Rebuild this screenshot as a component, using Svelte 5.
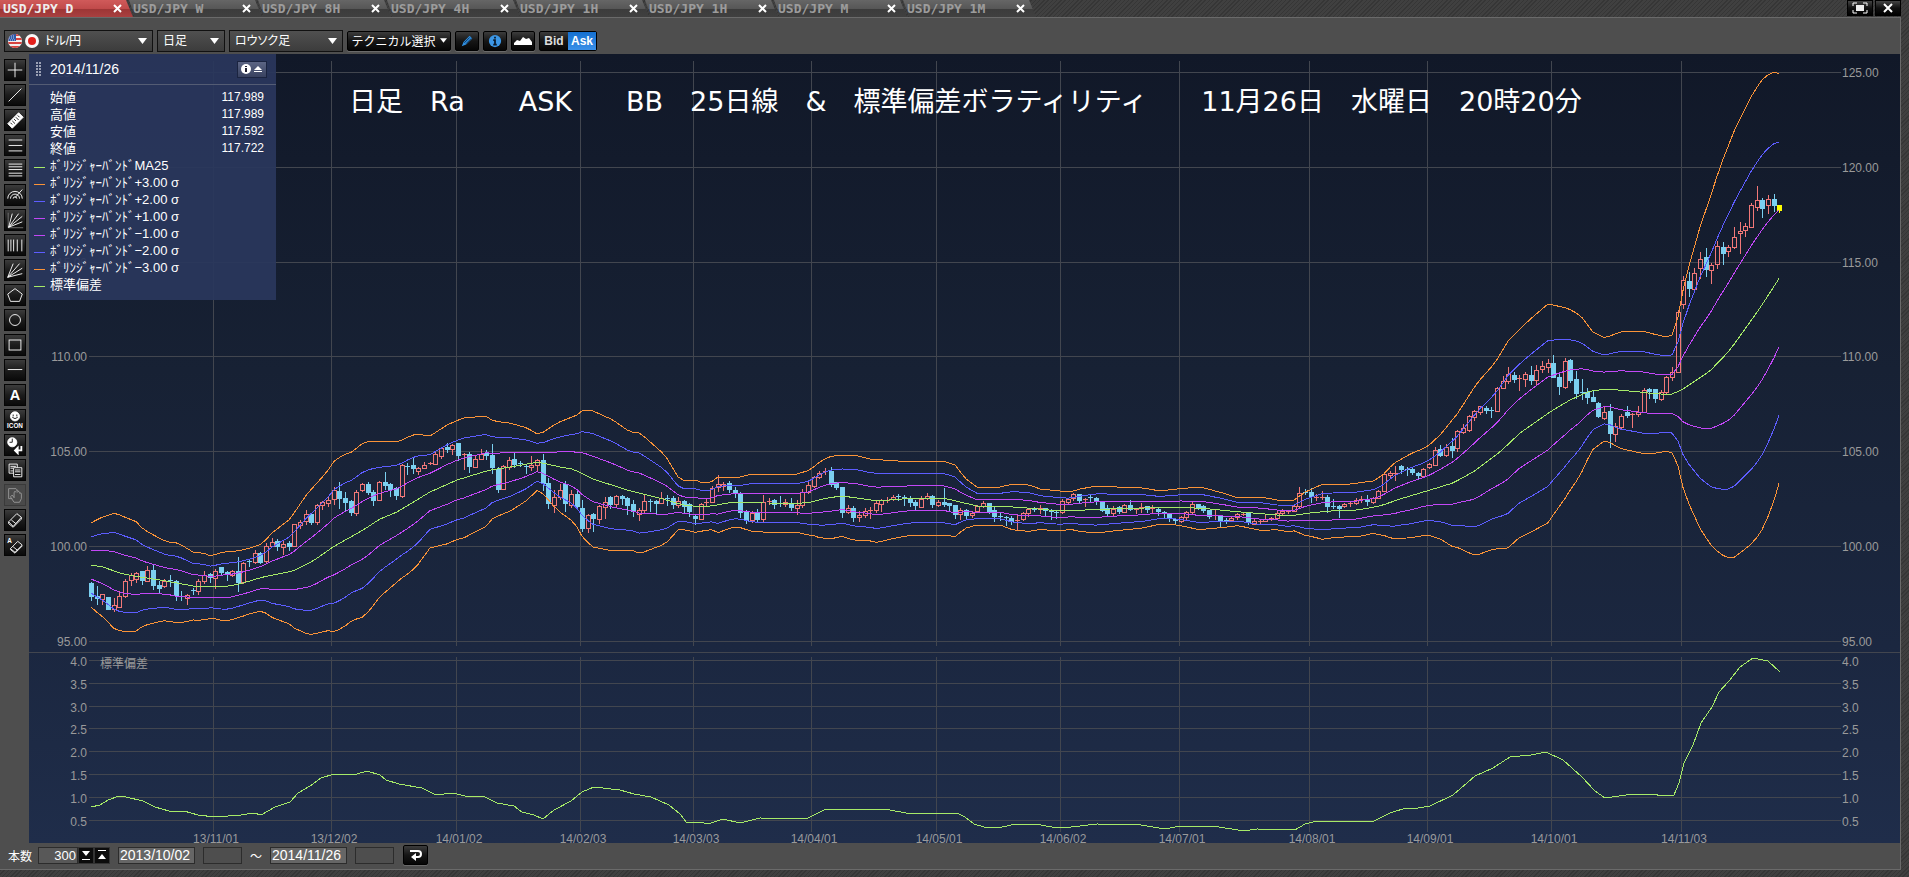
<script lang="ts">
	type Point = [number, number];

	interface Candle {
		x: number;
		up: boolean;
		high: number;
		top: number;
		bottom: number;
		low: number;
	}

	const tabs = ['D', 'W', '8H', '4H', '1H', '1H', 'M', '1M'];

	const tools = [
		'十字線', 'ライン', '定規', '水平線3本', '水平線5本', '円弧', 'ファン', '縦線', '放射線', '五角形',
		'円', '四角', '水平線', 'テキスト', 'アイコン', '時間', 'コピー', '移動', '消しゴム', 'すべて消す'
	];

	const prices = [
		{ label: '始値', value: '117.989' },
		{ label: '高値', value: '117.989' },
		{ label: '安値', value: '117.592' },
		{ label: '終値', value: '117.722' }
	];

	const band = 'ﾎﾞﾘﾝｼﾞｬｰﾊﾞﾝﾄﾞ';
	const legend = [
		{ tone: 'ma', label: band + 'MA25' },
		{ tone: 's3', label: band + '+3.00 σ' },
		{ tone: 's2', label: band + '+2.00 σ' },
		{ tone: 's1', label: band + '+1.00 σ' },
		{ tone: 's1', label: band + '−1.00 σ' },
		{ tone: 's2', label: band + '−2.00 σ' },
		{ tone: 's3', label: band + '−3.00 σ' },
		{ tone: 'ma', label: '標準偏差' }
	];

	const months = [
		{ x: 213, label: '13/11/01' },
		{ x: 331, label: '13/12/02' },
		{ x: 456, label: '14/01/02' },
		{ x: 580, label: '14/02/03' },
		{ x: 693, label: '14/03/03' },
		{ x: 811, label: '14/04/01' },
		{ x: 936, label: '14/05/01' },
		{ x: 1060, label: '14/06/02' },
		{ x: 1179, label: '14/07/01' },
		{ x: 1309, label: '14/08/01' },
		{ x: 1427, label: '14/09/01' },
		{ x: 1551, label: '14/10/01' },
		{ x: 1681, label: '14/11/03' }
	];

	const priceTicks = [125, 120, 115, 110, 105, 100, 95].map((p, i) => ({
		y: Math.round(72 + i * 94.8),
		label: p.toFixed(2)
	}));

	const sdTicks = [4, 3.5, 3, 2.5, 2, 1.5, 1, 0.5].map((v, i) => ({
		y: Math.round(660 + i * 22.8),
		label: v.toFixed(1)
	}));

	// direction, high, body top, body bottom, low
	const rows = `d 582 583 597 601,d 586 596 599 605,u 594 594 599 605,d 597 597 610 610,u 598 605 609 612,u 591 596 607 607
u 579 581 596 598,u 573 575 580 586,u 572 573 579 583,d 571 571 581 585,u 566 570 581 582,d 565 570 586 590
d 581 585 589 593,u 579 581 586 588,d 575 580 581 587,d 580 581 596 601,d 591 596 597 601,u 594 595 598 605
d 588 590 591 595,u 579 581 591 595,u 571 575 581 584,d 573 574 578 583,u 569 571 578 589,d 567 567 573 575
d 571 572 575 581,u 570 571 575 577,d 557 571 583 592,u 562 563 582 584,d 559 561 562 567,u 550 553 562 564
d 552 553 563 564,u 543 546 561 563,u 538 542 546 547,d 539 541 547 551,u 540 544 547 555,d 541 543 547 551
u 524 524 546 547,u 520 522 525 529,u 510 514 521 525,d 513 514 523 525,u 504 505 522 525,u 501 502 505 510
u 497 500 503 507,u 487 490 499 505,d 482 491 499 509,d 492 498 503 511,d 500 501 513 516,u 490 492 513 516
u 483 484 490 492,d 482 484 493 495,d 490 492 501 506,u 481 482 500 501,d 472 482 486 490,d 483 484 490 497
d 487 488 496 500,u 464 465 496 498,d 463 466 467 475,d 458 465 469 474,u 467 468 471 475,u 462 465 468 469
u 462 463 464 465,u 452 454 464 464,u 447 448 456 459,d 443 447 450 453,u 444 445 449 455,d 443 443 456 461
u 453 454 455 470,d 452 454 467 473,u 455 459 467 468,u 449 454 459 460,d 450 453 456 460,d 444 455 468 474
d 467 469 490 493,u 465 466 489 490,u 457 460 467 470,d 452 459 465 468,d 461 463 464 467,d 465 466 467 474
u 456 465 467 471,u 459 460 465 472,d 454 460 484 491,d 478 483 504 509,u 490 497 505 513,u 484 490 497 500
d 481 484 504 512,u 490 494 505 508,d 489 494 507 510,d 500 508 529 532,u 514 515 528 533,d 513 514 519 532
u 505 506 519 524,u 497 502 507 519,d 496 497 505 509,u 495 496 504 508,d 495 496 499 505,d 497 498 506 515
d 500 504 512 517,u 508 510 514 521,u 495 501 510 513,d 499 501 502 512,d 500 501 504 514,u 492 498 503 504
d 495 498 499 506,d 496 498 505 509,u 497 501 505 508,d 500 501 507 514,d 503 504 512 517,d 514 516 519 525
u 503 504 519 520,u 498 502 503 506,u 486 488 502 503,u 475 484 487 492,u 482 484 486 491,d 481 483 490 493
d 487 490 493 498,d 492 494 513 518,d 510 512 521 524,u 511 513 520 523,d 509 513 520 523,u 495 502 519 522
u 498 501 502 505,d 499 500 505 509,d 496 503 504 507,u 499 502 504 507,d 498 503 508 511,u 500 505 508 515
u 489 492 505 508,u 482 485 492 494,u 476 477 486 488,u 471 473 477 479,u 468 471 472 475,d 467 471 485 487
d 482 482 488 490,d 487 487 513 518,u 505 508 512 514,d 506 508 518 522,u 511 515 517 522,u 508 511 515 518
u 507 510 511 519,u 501 503 510 513,u 499 500 504 512,u 497 500 501 503,u 495 497 499 501,d 494 496 497 501
d 495 497 498 506,d 496 498 503 507,d 500 502 506 510,u 496 499 507 508,u 493 496 498 500,d 495 496 505 508
u 500 502 505 507,d 488 502 505 507,d 503 503 506 511,d 505 505 515 519,u 508 510 514 520,d 509 510 516 519
u 511 513 515 518,u 505 506 511 512,u 501 503 506 508,d 503 503 513 514,d 506 510 517 522,d 513 516 517 521
d 516 517 518 526,d 516 518 522 525,u 515 520 521 530,u 512 513 519 521,u 509 509 513 517,d 507 509 510 512
u 505 508 509 514,d 508 508 511 516,d 509 511 512 520,d 510 512 513 519,u 499 501 512 514,u 498 499 502 504
u 493 494 498 501,d 494 494 501 503,u 498 499 500 507,d 495 497 498 502,d 497 498 502 505,d 501 502 511 512
d 505 508 514 516,u 506 509 513 516,d 506 507 512 514,u 504 505 512 513,d 500 505 510 511,u 508 509 510 514
u 503 507 508 513,d 506 506 510 513,u 505 508 509 513,d 508 509 512 516,d 511 512 514 519,d 513 514 519 522
d 518 519 521 524,u 516 517 521 523,u 511 512 517 520,u 502 504 512 514,d 504 504 508 510,d 505 506 511 513
d 510 510 517 519,u 509 515 515 520,d 515 515 521 527,d 518 520 521 524,u 516 518 520 522,u 513 514 517 520
u 513 514 515 516,d 513 513 523 525,u 519 521 524 525,u 520 521 522 524,u 515 519 521 522,u 517 518 519 521
u 511 513 518 520,u 509 511 513 515,u 510 511 512 514,u 505 506 511 512,u 487 493 506 508,d 489 492 493 495
d 488 492 497 503,u 494 497 498 501,u 491 497 498 500,d 495 497 507 513,d 499 506 507 509,d 505 506 509 518
u 503 504 506 508,u 501 503 504 507,u 498 500 503 505,u 496 499 500 503,d 495 499 502 506,u 497 498 502 504
u 490 491 498 499,u 473 474 491 492,u 471 473 475 479,u 466 473 474 481,d 465 466 470 474,d 467 469 470 476
d 468 469 473 475,d 472 473 476 479,u 468 469 476 477,u 463 464 467 469,u 447 450 465 466,d 445 449 456 457
u 444 447 455 457,d 438 446 451 458,u 430 431 448 452,u 424 428 432 434,u 415 416 430 432,u 410 411 417 421
u 406 406 412 415,d 406 408 411 414,d 407 410 411 418,u 387 388 411 412,u 376 381 388 389,u 367 374 381 384
d 372 375 380 383,u 375 378 379 391,u 372 374 379 387,d 366 375 381 385,u 365 370 380 386,u 361 366 369 373
u 359 363 367 373,d 355 363 378 378,d 373 377 387 395,u 358 361 387 389,d 359 360 381 383,d 371 379 394 399
d 379 392 393 400,d 388 392 398 404,d 391 397 402 402,d 402 403 417 418,u 407 412 418 420,d 404 411 434 448
u 423 426 434 442,u 414 416 427 429,d 406 412 416 418,u 413 414 415 428,u 406 412 414 417,u 388 390 412 413
d 388 389 392 399,d 389 389 399 403,u 390 392 399 401,u 376 377 392 395,u 367 372 377 381,u 310 312 372 373
u 276 280 304 309,d 272 281 289 297,u 268 273 289 291,u 252 259 268 279,d 248 257 270 277,u 263 265 270 284
u 241 246 264 269,d 242 247 254 265,u 245 247 251 257,u 227 237 247 249,u 222 231 233 254,u 223 226 230 237
u 203 205 227 228,u 186 200 207 211,d 198 200 209 218,u 195 199 205 214,d 194 199 206 212,d 205 205 211 213`;

	const candles: Candle[] = rows.split(/[,\n]+/).map((row, i) => {
		const [dir, high, top, bottom, low] = row.trim().split(' ');
		return {
			x: Math.round(91 + i * 5.646),
			up: dir === 'u',
			high: +high,
			top: +top,
			bottom: Math.max(+bottom, +top + 1),
			low: +low
		};
	});

	const average: Point[] = [
		[91, 565], [103, 567], [123, 574], [140, 577], [160, 580], [177, 583], [193, 586], [210, 587], [230, 586],
		[243, 583], [263, 577], [293, 571], [313, 561], [333, 547], [363, 530], [380, 519], [397, 512], [430, 492],
		[457, 480], [490, 470], [517, 466], [538, 462], [560, 467], [573, 469], [593, 479], [627, 490], [643, 494],
		[663, 499], [683, 505], [703, 507], [717, 505], [733, 502], [760, 503], [807, 503], [827, 498], [842, 496],
		[857, 498], [877, 501], [913, 498], [943, 498], [960, 502], [977, 506], [1000, 506], [1027, 508], [1060, 511],
		[1110, 509], [1177, 507], [1210, 509], [1240, 512], [1290, 516], [1310, 513], [1330, 511], [1357, 510],
		[1380, 506], [1400, 499], [1430, 490], [1453, 483], [1473, 472], [1500, 452], [1520, 433], [1550, 412],
		[1570, 400], [1590, 391], [1607, 389], [1640, 392], [1657, 394], [1673, 394], [1683, 389], [1710, 371],
		[1730, 350], [1760, 308], [1780, 277]
	];

	const upper: Point[] = [
		[91, 523], [100, 518], [115, 513], [127, 518], [137, 522], [143, 529], [157, 537], [167, 542], [178, 543],
		[193, 552], [203, 553], [211, 556], [223, 552], [237, 551], [247, 549], [262, 544], [272, 533], [290, 519],
		[307, 494], [327, 472], [333, 462], [343, 455], [352, 452], [363, 443], [370, 441], [398, 442], [410, 436],
		[417, 434], [430, 436], [447, 425], [463, 418], [487, 416], [493, 421], [510, 423], [527, 428], [539, 435],
		[557, 423], [577, 415], [583, 410], [593, 411], [613, 420], [630, 432], [640, 433], [665, 455], [678, 477],
		[685, 481], [695, 480], [703, 483], [710, 483], [718, 477], [740, 477], [752, 474], [797, 474], [810, 470],
		[822, 460], [832, 456], [855, 455], [870, 459], [897, 461], [943, 461], [955, 465], [965, 478], [977, 487],
		[1000, 487], [1013, 484], [1030, 485], [1040, 489], [1070, 492], [1080, 489], [1097, 486], [1117, 487],
		[1143, 488], [1160, 491], [1177, 489], [1200, 487], [1223, 493], [1238, 498], [1260, 497], [1277, 500],
		[1295, 500], [1303, 493], [1323, 484], [1350, 484], [1373, 481], [1382, 476], [1393, 464], [1410, 454],
		[1427, 447], [1440, 435], [1458, 413], [1477, 383], [1495, 363], [1508, 341], [1527, 322], [1548, 304],
		[1567, 308], [1580, 315], [1593, 332], [1605, 338], [1620, 332], [1643, 331], [1653, 334], [1667, 337],
		[1673, 335], [1678, 317], [1685, 280], [1700, 227], [1710, 198], [1720, 167], [1735, 129], [1753, 93],
		[1762, 80], [1770, 73], [1775, 72], [1780, 74]
	];

	const deviation: Point[] = [
		[91, 807], [100, 805], [108, 800], [119, 796], [126, 797], [143, 801], [155, 807], [169, 811], [184, 811],
		[198, 815], [215, 817], [241, 815], [254, 813], [261, 815], [275, 807], [290, 802], [298, 793], [310, 786],
		[321, 778], [334, 774], [357, 774], [367, 771], [380, 775], [386, 780], [399, 784], [422, 788], [436, 795],
		[453, 793], [465, 796], [485, 797], [497, 803], [514, 806], [522, 812], [534, 815], [543, 819], [554, 810],
		[571, 801], [582, 792], [594, 787], [620, 790], [634, 794], [651, 797], [669, 805], [680, 814], [687, 823],
		[700, 822], [708, 824], [723, 819], [740, 823], [760, 818], [806, 819], [826, 809], [867, 809], [890, 810],
		[906, 813], [957, 813], [965, 817], [974, 824], [984, 827], [1002, 827], [1016, 824], [1035, 824], [1052, 827],
		[1071, 827], [1097, 824], [1141, 825], [1165, 829], [1180, 826], [1213, 826], [1244, 831], [1257, 829],
		[1295, 830], [1305, 824], [1317, 821], [1374, 821], [1390, 813], [1406, 808], [1418, 808], [1430, 806],
		[1453, 795], [1475, 776], [1493, 768], [1510, 757], [1531, 755], [1546, 752], [1563, 760], [1582, 777],
		[1595, 791], [1605, 798], [1626, 795], [1652, 794], [1663, 796], [1674, 795], [1679, 783], [1684, 763],
		[1693, 745], [1701, 723], [1712, 707], [1719, 692], [1729, 681], [1740, 667], [1753, 658], [1768, 661],
		[1780, 672]
	];

	function at(points: Point[], x: number) {
		const i = points.findIndex((p) => p[0] >= x);
		if (i === 0) return points[0][1];
		if (i < 0) return points[points.length - 1][1];
		const [x0, y0] = points[i - 1];
		const [x1, y1] = points[i];
		return y0 + ((y1 - y0) * (x - x0)) / (x1 - x0);
	}

	function bandLine(sigma: number) {
		return candles
			.map(({ x }) => {
				const mid = at(average, x);
				return `${x},${(mid + ((at(upper, x) - mid) * sigma) / 3).toFixed(1)}`;
			})
			.join(' ');
	}

	const bands = [
		{ tone: 's3', sigma: 3 },
		{ tone: 's3', sigma: -3 },
		{ tone: 's2', sigma: 2 },
		{ tone: 's2', sigma: -2 },
		{ tone: 's1', sigma: 1 },
		{ tone: 's1', sigma: -1 },
		{ tone: 'ma', sigma: 0 }
	].map((b) => ({ tone: b.tone, points: bandLine(b.sigma) }));

	let active = $state(0);
	let side = $state('Ask');
</script>

<div class="window">
	<header class="tab-bar">
		<nav class="tabs">
			{#each tabs as tab, i}
				<div class="tab" class:active={active === i}>
					<button class="tab-name" onclick={() => (active = i)}>USD/JPY {tab}</button>
					<button class="tab-close" aria-label="閉じる">
						<svg viewBox="0 0 9 9" width="9" height="9"><path d="M1 1l7 7M8 1l-7 7" /></svg>
					</button>
				</div>
			{/each}
		</nav>
		<div class="window-buttons">
			<button aria-label="最大化">
				<svg viewBox="0 0 16 12" width="16" height="12">
					<path d="M1 4V1h4M11 1h4v3M15 8v3h-4M5 11H1V8" fill="none" stroke="#fff" />
					<rect x="4" y="3" width="8" height="6" fill="#eee" />
				</svg>
			</button>
			<button aria-label="閉じる">
				<svg viewBox="0 0 12 12" width="12" height="12">
					<path d="M2 2l8 8M10 2l-8 8" stroke="#fff" stroke-width="2" />
				</svg>
			</button>
		</div>
	</header>

	<div class="frame">
		<div class="toolbar">
			<label class="picker pair">
				<svg class="flags" viewBox="0 0 34 16" width="34" height="16">
					<clipPath id="us"><circle cx="8" cy="8" r="7" /></clipPath>
					<g clip-path="url(#us)">
						<rect width="16" height="16" fill="#f3eeee" />
						<path d="M0 2h16M0 6h16M0 10h16M0 14h16" stroke="#d8433f" stroke-width="2" />
						<rect width="9" height="8" fill="#2f5aa8" />
						<path d="M2 3h6M2 5h6M1 7h7" stroke="#b9cdf0" stroke-dasharray="1 1" />
					</g>
					<circle cx="25" cy="8" r="7" fill="#f8f8f8" />
					<circle cx="25" cy="8" r="4" fill="#e3201b" />
				</svg>
				<select aria-label="通貨ペア"><option>ドル/円</option></select>
				<svg class="arrow" viewBox="0 0 9 6" width="9" height="6"><path d="M0 0h9L4.500 6z" /></svg>
			</label>
			<label class="picker span">
				<select aria-label="足種"><option>日足</option></select>
				<svg class="arrow" viewBox="0 0 9 6" width="9" height="6"><path d="M0 0h9L4.500 6z" /></svg>
			</label>
			<label class="picker style">
				<select aria-label="チャート"><option>ロウソク足</option></select>
				<svg class="arrow" viewBox="0 0 9 6" width="9" height="6"><path d="M0 0h9L4.500 6z" /></svg>
			</label>
			<button class="dark technical">
				テクニカル選択
				<svg class="arrow" viewBox="0 0 9 6" width="7" height="5"><path d="M0 0h9L4.500 6z" /></svg>
			</button>
			<button class="dark icon" aria-label="描画">
				<svg viewBox="0 0 16 16" width="14" height="14">
					<path d="M2 14l2-5 7-7 3 3-7 7z" fill="#2f8fe0" />
					<path d="M5 10l6-6M7 11l6-6" stroke="#0b2c4d" />
				</svg>
			</button>
			<button class="dark icon" aria-label="情報">
				<svg viewBox="0 0 16 16" width="14" height="14">
					<circle cx="8" cy="8" r="7" fill="#3c97e6" />
					<path d="M8 3v2M6 7h2v5M6 12h4" stroke="#0b1a2a" stroke-width="2" fill="none" />
				</svg>
			</button>
			<button class="dark icon" aria-label="エリア">
				<svg viewBox="0 0 18 10" width="18" height="10">
					<path d="M0 9V7l3-3 3 1 3-4 3 2 3-1 3 4v3z" fill="#fff" />
				</svg>
			</button>
			<div class="sides">
				{#each ['Bid', 'Ask'] as name}
					<button class:on={side === name} onclick={() => (side = name)}>{name}</button>
				{/each}
			</div>
		</div>

		<div class="body">
			<aside class="tools">
				{#each tools as tool, i}
					<button aria-label={tool} class:off={i === 17}>
						<svg viewBox="0 0 22 22" width="20" height="20">
							{#if i === 0}
								<path d="M11 3v16M3 11h16" />
							{:else if i === 1}
								<path d="M4 18L18 4" />
							{:else if i === 2}
								<path d="M3 15L15 3l5 5L8 20z" fill="#fff" />
								<path d="M6 14l2 2M8 12l3 3M10 10l2 2M12 8l3 3M14 6l2 2" stroke="#111" />
							{:else if i === 3}
								<path d="M4 5.500h15M4 11.500h15M4 17.500h15" />
							{:else if i === 4}
								<path d="M4 4.500h15M4 7.500h15M4 10.500h15M4 14.500h15M4 17.500h15" />
							{:else if i === 5}
								<path d="M3 15a8 8 0 0 1 16 0M6 15a5 5 0 0 1 10 0M9 15a2 2 0 0 1 4 0M11 14l8-9" />
							{:else if i === 6}
								<path d="M3.500 3v16.500H20" stroke="#777" />
								<path d="M4 19L8 4M4 19L15 4M4 19L19 7M4 19l15-6" />
							{:else if i === 7}
								<path d="M3.500 5v13M6.500 5v13M9.500 5v13M13.500 5v13M18.500 5v13" />
							{:else if i === 8}
								<path d="M3 19L9 4M3 19L16 4M3 19L19 9M3 19l16-4" />
							{:else if i === 9}
								<path d="M11 4l8 6-3 8H6L3 10z" />
							{:else if i === 10}
								<circle cx="11" cy="11" r="6" />
							{:else if i === 11}
								<rect x="4.500" y="5.500" width="13" height="11" />
							{:else if i === 12}
								<path d="M3 10.500h16" />
							{:else if i === 13}
								<text x="11" y="17" class="letter">A</text>
							{:else if i === 14}
								<circle cx="11" cy="7" r="5" fill="#fff" />
								<path d="M9 5v2M13 5v2M8 8q3 3 6 0" stroke="#111" />
								<text x="11" y="20" class="tiny">ICON</text>
							{:else if i === 15}
								<circle cx="8" cy="8" r="5" fill="#fff" />
								<path d="M8 4v4H5" stroke="#111" />
								<path d="M18 12v5h-6M14 14l-3 3 3 3z" stroke-width="2" />
							{:else if i === 16}
								<path d="M4.500 4.500h9v10h-9zM6 7h6M6 9h3M6 12h3" />
								<path d="M9.500 8.500h9v10h-9z" fill="#111" />
								<path d="M11 11h6M11 13h6M11 16h6" />
							{:else if i === 17}
								<path d="M8 15H4V4h8l3 3M8 11l2 3V8q1-2 2 0V7q1-2 2 0v1q1-2 2 0v1q2-1 2 1v5l-2 4h-6l-4-6z" />
							{:else if i === 18}
								<path d="M4 13L13 4l5 4-9 10zM4 13v2l5 4 9-9V8M7 11l5 4" />
							{:else}
								<path d="M6 15l8-8 5 4-8 8zM6 15v1l5 4 8-8M9 13l5 4" />
								<text x="5" y="9" class="tiny">A</text>
							{/if}
						</svg>
					</button>
				{/each}
			</aside>

			<main class="chart">
				<svg class="plot" viewBox="29 54 1871 789" role="img" aria-label="USD/JPY 日足チャート">
					<g class="grid">
						{#each months as m}
							<path d="M{m.x}.500 61V646M{m.x}.500 657V832" />
						{/each}
						{#each priceTicks as t}
							<path d="M89 {t.y}.500H1841" />
						{/each}
						{#each sdTicks as t}
							<path d="M89 {t.y}.500H1841" />
						{/each}
						<path d="M29 652.500H1900" />
					</g>

					<g class="axis">
						{#each priceTicks as t}
							<text x="87" y={t.y + 5} text-anchor="end">{t.label}</text>
							<text x="1842" y={t.y + 5}>{t.label}</text>
						{/each}
						{#each sdTicks as t}
							<text x="87" y={t.y + 6} text-anchor="end">{t.label}</text>
							<text x="1842" y={t.y + 6}>{t.label}</text>
						{/each}
						{#each months as m}
							<text x={m.x + 3} y="843" text-anchor="middle">{m.label}</text>
						{/each}
						<text x="100" y="668">標準偏差</text>
					</g>

					<g class="candles">
						{#each candles as c, i}
							<g class={i === candles.length - 1 ? 'last' : c.up ? 'up' : 'down'}>
								<path d="M{c.x}.500 {c.high}V{c.top}M{c.x}.500 {c.bottom}V{c.low}" />
								{#if c.up && c.bottom - c.top > 1}
									<rect x={c.x - 1.5} y={c.top + 0.5} width="4" height={c.bottom - c.top} />
								{:else}
									<rect class="solid" x={c.x - 2} y={c.top} width="5" height={c.bottom - c.top} />
								{/if}
							</g>
						{/each}
					</g>

					{#each bands as b}
						<polyline class="line {b.tone}" points={b.points} />
					{/each}
					<polyline class="line ma" points={deviation.map((p) => p.join(',')).join(' ')} />

					<text class="headline" x="349" y="111"
						>日足　Ra　　ASK　　BB　25日線　&amp;　標準偏差ボラティリティ　　11月26日　水曜日　20時20分</text
					>
				</svg>

				<section class="info">
					<div class="info-head">
						<span class="grip"></span>
						<span class="date">2014/11/26</span>
						<button class="fold" aria-label="たたむ">
							<svg viewBox="0 0 24 12" width="24" height="12">
								<circle cx="6" cy="6" r="5" fill="#fff" />
								<path d="M6 3v1M5 6h1v3" stroke="#223" stroke-width="2" fill="none" />
								<path d="M14 7l4-4 4 4zM14 8h8v1h-8z" fill="#fff" />
							</svg>
						</button>
					</div>
					<dl>
						{#each prices as p}
							<div class="row"><dt>{p.label}</dt><dd>{p.value}</dd></div>
						{/each}
					</dl>
					<ul>
						{#each legend as l}
							<li class="row"><span class="swatch {l.tone}"></span>{l.label}</li>
						{/each}
					</ul>
				</section>
			</main>
		</div>

		<footer class="range">
			<label for="count">本数</label>
			<div class="count">
				<input id="count" value="300" />
				<button aria-label="減らす"><svg viewBox="0 0 10 10" width="10" height="10"><path d="M1 1h8L5 6zM1 9h8v1H1z" /></svg></button>
				<button aria-label="増やす"><svg viewBox="0 0 10 10" width="10" height="10"><path d="M1 9h8L5 4zM1 0h8v1H1z" /></svg></button>
			</div>
			<input class="day" aria-label="開始日" value="2013/10/02" />
			<input class="time" aria-label="開始時刻" disabled />
			<span class="tilde">～</span>
			<input class="day" aria-label="終了日" value="2014/11/26" />
			<input class="time" aria-label="終了時刻" disabled />
			<button class="dark back" aria-label="適用">
				<svg viewBox="0 0 14 12" width="14" height="12">
					<path d="M1 2h8q3 0 3 3t-3 3H6" fill="none" stroke="#fff" stroke-width="2" />
					<path d="M7 4v8L2 8z" fill="#fff" />
				</svg>
			</button>
		</footer>
	</div>
</div>

<style>
	:global(body) {
		background: #3a3a3a;
	}

	.window {
		min-height: 100vh;
		box-sizing: border-box;
		padding: 0 8px 6px 0;
		font-family: 'Liberation Sans', 'Noto Sans CJK JP', sans-serif;
		font-size: 12px;
		color: #fff;
		background: repeating-linear-gradient(135deg, #363636 0 1px, #404040 1px 3px);
	}

	button,
	input,
	select {
		font: inherit;
		color: inherit;
		margin: 0;
		padding: 0;
		border: 0;
		background: none;
		border-radius: 0;
	}

	.tab-bar {
		display: flex;
		justify-content: space-between;
		height: 17px;
	}

	.tabs {
		display: flex;
	}

	.tab {
		display: flex;
		align-items: center;
		justify-content: space-between;
		box-sizing: border-box;
		width: 134px;
		margin-right: -5px;
		padding: 0 12px 0 4px;
		color: #9c9c9c;
		background: linear-gradient(#666 0, #565656 9px, #3c3c3c 9px, #404040);
		clip-path: polygon(0 0, 126px 0, 133px 100%, 6px 100%);
	}

	.tab:first-child {
		padding-left: 3px;
		clip-path: polygon(0 0, 126px 0, 133px 100%, 0 100%);
	}

	.tab.active {
		color: #eee;
		background: linear-gradient(#d05a5a 0, #c04a4a 9px, #9c3535 9px, #a84040);
	}

	.tab-name {
		font-family: 'DejaVu Sans Mono', monospace;
		font-weight: bold;
		font-size: 13px;
		line-height: 17px;
	}

	.tab-close {
		display: flex;
	}

	.tab-close path {
		stroke: #fff;
		stroke-width: 2;
	}

	.window-buttons {
		display: flex;
		gap: 2px;
	}

	.window-buttons button {
		display: flex;
		align-items: center;
		justify-content: center;
		width: 26px;
		height: 16px;
		background: linear-gradient(#444, #111 50%, #000);
		border: 1px solid #000;
		box-sizing: border-box;
	}

	.frame {
		background: #4e4e4e;
		border-right: 1px solid #6a6a6a;
		border-bottom: 1px solid #6a6a6a;
	}

	.toolbar {
		display: flex;
		align-items: center;
		gap: 4px;
		height: 37px;
		padding: 9px 4px 0;
		box-sizing: border-box;
		border-top: 1px solid #6a6a6a;
	}

	.picker {
		display: flex;
		align-items: center;
		box-sizing: border-box;
		height: 22px;
		padding: 0 5px;
		border: 1px solid #111;
		background: linear-gradient(#505050, #3c3c3c);
	}

	.picker select {
		flex: 1;
		min-width: 0;
		appearance: none;
		font-feature-settings: 'palt';
	}

	.picker option {
		color: #000;
	}

	.pair {
		width: 149px;
		padding-left: 2px;
	}

	.span {
		width: 68px;
	}

	.style {
		width: 114px;
	}

	.flags {
		margin-right: 4px;
	}

	.arrow {
		fill: #fff;
		pointer-events: none;
	}

	.dark {
		display: flex;
		align-items: center;
		justify-content: center;
		box-sizing: border-box;
		height: 20px;
		border: 1px solid #000;
		border-radius: 2px;
		background: linear-gradient(#3c3c3c, #161616 50%, #060606);
		box-shadow: 0 1px #6a6a6a;
	}

	.technical {
		gap: 4px;
		width: 104px;
		white-space: nowrap;
	}

	.icon {
		width: 24px;
	}

	.sides {
		display: flex;
		box-sizing: border-box;
		height: 20px;
		border: 1px solid #000;
		border-radius: 2px;
		background: linear-gradient(#3c3c3c, #161616 50%, #060606);
	}

	.sides button {
		width: 28px;
		font-weight: bold;
		color: #ddd;
	}

	.sides .on {
		color: #fff;
		background: linear-gradient(#1570d0, #3a90e8);
	}

	.body {
		display: flex;
		align-items: stretch;
	}

	.tools {
		display: flex;
		flex-direction: column;
		gap: 3px;
		flex: none;
		box-sizing: border-box;
		width: 29px;
		padding: 5px 3px 0 4px;
	}

	.tools button {
		display: flex;
		width: 22px;
		height: 22px;
		box-sizing: border-box;
		border: 1px solid #050505;
		background: linear-gradient(#3c3c3c, #1c1c1c 50%, #0a0a0a);
	}

	.tools path,
	.tools circle,
	.tools rect {
		fill: none;
		stroke: #fff;
	}

	.tools path[fill],
	.tools circle[fill] {
		fill: #fff;
	}

	.tools path[fill='#111'] {
		fill: #111;
	}

	.tools path[stroke='#111'] {
		stroke: #111;
	}

	.tools path[stroke='#777'] {
		stroke: #777;
	}

	.tools .off {
		border-color: #3a3a3a;
		background: #4a4a4a;
	}

	.tools .off path {
		stroke: #999;
	}

	.tools text {
		fill: #fff;
		font-weight: bold;
		text-anchor: middle;
	}

	.letter {
		font-size: 16px;
	}

	.tiny {
		font-size: 7px;
	}

	.chart {
		position: relative;
		flex: 1;
		min-width: 0;
		background: linear-gradient(#111828, #172134 40%, #1b2740 75%, #1f2d4a);
	}

	.plot {
		display: block;
		width: 100%;
		height: auto;
		overflow: visible;
	}

	.grid path {
		stroke: #42464f;
		fill: none;
	}

	.axis text {
		fill: #9a9a9a;
		font-size: 12px;
	}

	.candles {
		fill: none;
		shape-rendering: crispEdges;
	}

	.up {
		stroke: #f27878;
	}

	.up .solid {
		fill: #f27878;
	}

	.down {
		stroke: #7bd0f0;
	}

	.down .solid {
		fill: #7bd0f0;
	}

	.last {
		stroke: #ffff00;
	}

	.last .solid {
		fill: #ffff00;
	}

	.solid {
		stroke: none;
	}

	.ma {
		color: #a6ea68;
	}

	.s1 {
		color: #c247f7;
	}

	.s2 {
		color: #5d5dff;
	}

	.s3 {
		color: #fa9338;
	}

	.line {
		fill: none;
		stroke: currentColor;
		shape-rendering: crispEdges;
	}

	.headline {
		fill: #fff;
		font-family: 'DejaVu Sans', 'Noto Sans CJK JP', sans-serif;
		font-size: 27px;
	}

	.info {
		position: absolute;
		top: 0;
		left: 0;
		box-sizing: border-box;
		width: 247px;
		padding-bottom: 7px;
		font-size: 13px;
		background: rgba(42, 55, 92, 0.93);
	}

	.info-head {
		display: flex;
		align-items: center;
		height: 30px;
		padding: 0 9px 0 7px;
		border-bottom: 1px solid #545c74;
	}

	.grip {
		width: 6px;
		height: 15px;
		margin-right: 8px;
		background: radial-gradient(circle at 1px 1px, #9aa0b4 1px, transparent 1px) 0 0 / 3px 3px;
	}

	.date {
		flex: 1;
		font-size: 14px;
	}

	.fold {
		display: flex;
		align-items: center;
		justify-content: center;
		width: 30px;
		height: 17px;
		border: 1px solid #1b2440;
		background: linear-gradient(#5c6584, #38415f);
	}

	dl,
	ul,
	dd {
		margin: 0;
		padding: 0;
		list-style: none;
	}

	dl {
		padding-top: 4px;
	}

	.row {
		display: flex;
		align-items: center;
		height: 17px;
		line-height: 17px;
		padding: 0 12px 0 5px;
		white-space: pre;
	}

	dt {
		flex: 1;
		padding-left: 16px;
	}

	dd {
		font-size: 12px;
	}

	.swatch {
		width: 11px;
		height: 1px;
		margin: 3px 5px 0 0;
		background: currentColor;
	}

	.range {
		display: flex;
		align-items: center;
		height: 26px;
		padding: 0 8px 2px;
		box-sizing: border-box;
	}

	.range input {
		box-sizing: border-box;
		height: 17px;
		border: 1px solid #2c2c2c;
		background: #666;
		font-size: 14px;
	}

	.count {
		display: flex;
		width: 72px;
		margin: 0 8px 0 6px;
	}

	.count input {
		flex: 1;
		min-width: 0;
		padding-right: 1px;
		text-align: right;
		font-size: 13px;
		background: #585858;
	}

	.count button {
		display: flex;
		align-items: center;
		justify-content: center;
		width: 16px;
		height: 17px;
		border: 1px solid #333;
		box-sizing: border-box;
		background: #0c0c0c;
	}

	.count path {
		fill: #fff;
	}

	.range .day {
		width: 77px;
		padding-left: 1px;
	}

	.range .time {
		width: 39px;
		margin-left: 8px;
		background: #4e4e4e;
	}

	.tilde {
		width: 28px;
		text-align: center;
	}

	.back {
		width: 25px;
		margin-left: 9px;
	}
</style>
